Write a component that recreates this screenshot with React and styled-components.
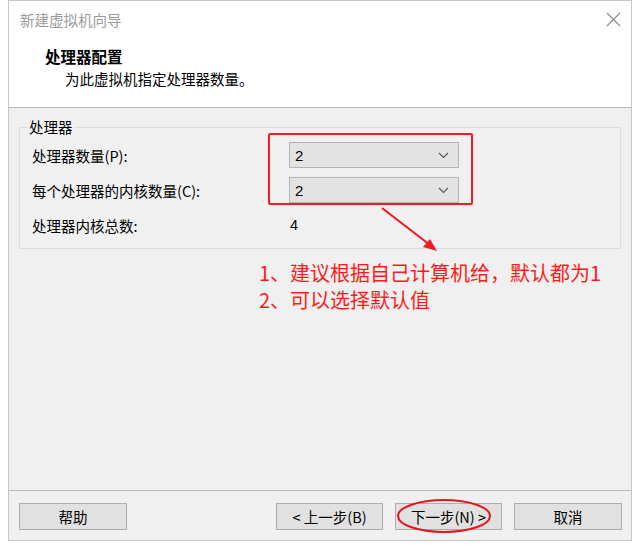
import React from 'react'
import styled, { createGlobalStyle } from 'styled-components'

const Global = createGlobalStyle`
  body {
    margin: 0;
    background: #fff;
    font-family: "Noto Sans CJK SC", "Noto Sans", sans-serif;
  }
`

const Window = styled.div`
  position: relative;
  margin-left: 8px;
  width: 624px;
  height: 541px;
  box-sizing: border-box;
  border: 1px solid #c6c6c6;
  display: flex;
  flex-direction: column;
  background: #fff;
`

const TitleBar = styled.div`
  height: 37px;
  padding: 0 10px 0 11px;
  display: flex;
  align-items: center;
  justify-content: space-between;
  font-size: 14.5px;
  color: #9a9a9a;
`

const Header = styled.div`
  height: 70px;
  box-sizing: border-box;
  border-bottom: 1px solid #b9b9b9;
  padding: 7px 0 0 36px;
  h1 {
    margin: 0;
    font-size: 15.5px;
    font-weight: 700;
    line-height: 22px;
    color: #000;
  }
  p {
    margin: 1px 0 0 20px;
    font-size: 14.5px;
    line-height: 22px;
    color: #000;
  }
`

const Body = styled.div`
  flex: 1;
  background: #f0f0f0;
  padding: 9px 10px 0 10px;
`

const Group = styled.fieldset`
  margin: 0;
  padding: 5px 12px 10px 12px;
  border: 1px solid #dcdcdc;
  legend {
    margin-left: -5px;
    padding: 0 2px;
    font-size: 14.5px;
    line-height: 20px;
    color: #000;
  }
`

const Grid = styled.div`
  display: grid;
  grid-template-columns: 257px 170px;
  grid-auto-rows: 26px;
  row-gap: 9px;
  align-items: center;
  font-size: 14.5px;
  color: #000;
`

const Select = styled.div`
  height: 26px;
  box-sizing: border-box;
  border: 1px solid #b5b5b5;
  background: #e3e3e3;
  display: flex;
  align-items: center;
  justify-content: space-between;
  padding: 0 9px 0 5px;
  font-family: "Liberation Sans", sans-serif;
  font-size: 15px;
`

const Value = styled.span`
  padding-left: 1px;
  font-family: "Liberation Sans", sans-serif;
`

const Note = styled.div`
  margin: 10px 0 0 240px;
  color: #ff1a1a;
  font-size: 20px;
  line-height: 27px;
`

const Footer = styled.div`
  height: 50px;
  box-sizing: border-box;
  border-top: 1px solid #b9b9b9;
  background: #f0f0f0;
  padding: 12px 9px 0 10px;
  display: flex;
  align-items: flex-start;
  gap: 12px;
`

const Button = styled.div`
  width: ${p => p.w || 107}px;
  height: 27px;
  box-sizing: border-box;
  border: 1px solid #adadad;
  background: #e1e1e1;
  display: flex;
  align-items: center;
  justify-content: center;
  font-size: 14.5px;
  color: #000;
  margin-left: ${p => (p.push ? 'auto' : '0')};
`

const Overlay = styled.svg`
  position: absolute;
  left: ${p => p.x}px;
  top: ${p => p.y}px;
  overflow: visible;
  pointer-events: none;
`

const RedBox = styled.div`
  position: absolute;
  left: 259px;
  top: 132px;
  width: 205px;
  height: 72px;
  box-sizing: border-box;
  border: 2px solid #f01c24;
  border-radius: 2px;
`

const Chevron = () => (
  <svg width="11" height="7" viewBox="0 0 11 7">
    <path d="M1 1 L5.5 5.5 L10 1" fill="none" stroke="#555" strokeWidth="1.1" />
  </svg>
)

const Close = () => (
  <svg width="15" height="15" viewBox="0 0 15 15">
    <path d="M1 1 L14 14 M14 1 L1 14" stroke="#8a8a8a" strokeWidth="1.1" />
  </svg>
)

export default function App() {
  return (
    <>
      <Global />
      <Window>
        <TitleBar>
          <span>新建虚拟机向导</span>
          <Close />
        </TitleBar>
        <Header>
          <h1>处理器配置</h1>
          <p>为此虚拟机指定处理器数量。</p>
        </Header>
        <Body>
          <Group>
            <legend>处理器</legend>
            <Grid>
              <span>处理器数量(P):</span>
              <Select><span>2</span><Chevron /></Select>
              <span>每个处理器的内核数量(C):</span>
              <Select><span>2</span><Chevron /></Select>
              <span>处理器内核总数:</span>
              <Value>4</Value>
            </Grid>
          </Group>
          <Note>
            <div>1、建议根据自己计算机给，默认都为1</div>
            <div>2、可以选择默认值</div>
          </Note>
        </Body>
        <Footer>
          <Button w={108}>帮助</Button>
          <Button push>&lt; 上一步(B)</Button>
          <Button>下一步(N) &gt;</Button>
          <Button w={108}>取消</Button>
        </Footer>

        <RedBox />
        <Overlay x={366} y={199} width="70" height="56">
          <line x1="7" y1="8" x2="55" y2="45" stroke="#f01c24" strokeWidth="2.2" />
          <polygon points="62,51 48,47 55,39" fill="#f01c24" />
        </Overlay>
        <Overlay x={386} y={496} width="100" height="40">
          <ellipse cx="49" cy="19" rx="46" ry="16" fill="none" stroke="#e8141c" strokeWidth="2" />
        </Overlay>
      </Window>
    </>
  )
}
